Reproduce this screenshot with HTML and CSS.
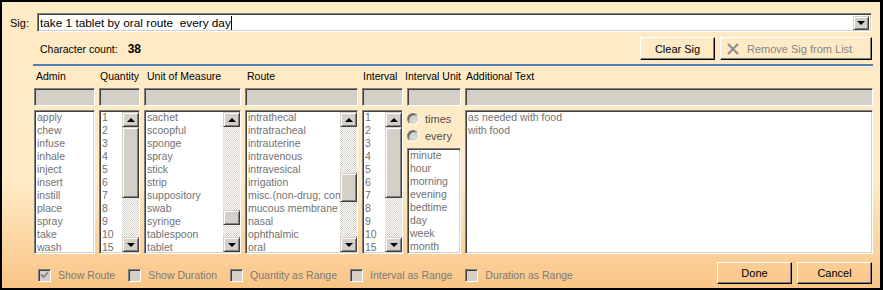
FILE: index.html
```html
<!DOCTYPE html>
<html lang="en">
<head>
    <meta charset="UTF-8">
    <title>Sig Builder</title>
    <link rel="stylesheet" href="styles.css">
</head>
<body>
<div class="window">
    <div class="sig-row">
        <label class="sig-label">Sig:</label>
        <div class="combo">
            <span class="combo-text">take 1 tablet by oral route  every day</span><span class="caret"></span>
            <span class="drop-btn"><i class="arrow-down"></i></span>
        </div>
    </div>

    <div class="count-row">
        <span>Character count:</span>
        <b class="count">38</b>
        <button class="btn btn-clear">Clear Sig</button>
        <button class="btn btn-remove" disabled>
            <svg width="12" height="12" viewBox="0 0 12 12"><path d="M1 1 L11 11 M11 1 L1 11" stroke="#8e8e8e" stroke-width="2.2" fill="none"/></svg>
            Remove Sig from List
        </button>
    </div>

    <div class="rule"></div>

    <div class="grid">
        <div class="head head-admin">Admin</div>
        <div class="head">Quantity</div>
        <div class="head head-uom">Unit of Measure</div>
        <div class="head head-route">Route</div>
        <div class="head">Interval</div>
        <div class="head head-unit">Interval Unit</div>
        <div class="head">Additional Text</div>

        <div class="field"></div>
        <div class="field"></div>
        <div class="field"></div>
        <div class="field"></div>
        <div class="field"></div>
        <div class="field"></div>
        <div class="field"></div>

        <div class="list">
            <div class="items">
                <div>apply</div><div>chew</div><div>infuse</div><div>inhale</div><div>inject</div><div>insert</div>
                <div>instill</div><div>place</div><div>spray</div><div>take</div><div>wash</div>
            </div>
        </div>
        <div class="list">
            <div class="items">
                <div>1</div><div>2</div><div>3</div><div>4</div><div>5</div><div>6</div>
                <div>7</div><div>8</div><div>9</div><div>10</div><div>15</div>
            </div>
            <div class="scroll">
                <span class="sbtn"><i class="arrow-up"></i></span>
                <div class="track"><div class="thumb" style="margin-top:0;height:71px"></div></div>
                <span class="sbtn"><i class="arrow-down"></i></span>
            </div>
        </div>
        <div class="list">
            <div class="items">
                <div>sachet</div><div>scoopful</div><div>sponge</div><div>spray</div><div>stick</div><div>strip</div>
                <div>suppository</div><div>swab</div><div>syringe</div><div>tablespoon</div><div>tablet</div>
            </div>
            <div class="scroll">
                <span class="sbtn"><i class="arrow-up"></i></span>
                <div class="track"><div class="thumb" style="margin-top:83px;height:15px"></div></div>
                <span class="sbtn"><i class="arrow-down"></i></span>
            </div>
        </div>
        <div class="list">
            <div class="items">
                <div>intrathecal</div><div>intratracheal</div><div>intrauterine</div><div>intravenous</div>
                <div>intravesical</div><div>irrigation</div><div>misc.(non-drug; combo route)</div>
                <div>mucous membrane</div><div>nasal</div><div>ophthalmic</div><div>oral</div>
            </div>
            <div class="scroll">
                <span class="sbtn"><i class="arrow-up"></i></span>
                <div class="track"><div class="thumb" style="margin-top:46px;height:29px"></div></div>
                <span class="sbtn"><i class="arrow-down"></i></span>
            </div>
        </div>
        <div class="list">
            <div class="items">
                <div>1</div><div>2</div><div>3</div><div>4</div><div>5</div><div>6</div>
                <div>7</div><div>8</div><div>9</div><div>10</div><div>15</div>
            </div>
            <div class="scroll">
                <span class="sbtn"><i class="arrow-up"></i></span>
                <div class="track"><div class="thumb" style="margin-top:0;height:71px"></div></div>
                <span class="sbtn"><i class="arrow-down"></i></span>
            </div>
        </div>
        <div class="unit-cell">
            <div class="radio-row"><span class="radio"></span>times</div>
            <div class="radio-row"><span class="radio"></span>every</div>
            <div class="list unit-list">
                <div class="items">
                    <div>minute</div><div>hour</div><div>morning</div><div>evening</div>
                    <div>bedtime</div><div>day</div><div>week</div><div>month</div>
                </div>
            </div>
        </div>
        <div class="list">
            <div class="items">
                <div>as needed with food</div><div>with food</div>
            </div>
        </div>
    </div>

    <div class="bottom-row">
        <div class="checks">
            <label class="check"><span class="box"><svg width="9" height="8" viewBox="0 0 9 8"><path d="M1 3.5 L3.5 6 L8 1.5" stroke="#8a8a8a" stroke-width="2" fill="none"/></svg></span>Show Route</label>
            <label class="check"><span class="box"></span>Show Duration</label>
            <label class="check"><span class="box"></span>Quantity as Range</label>
            <label class="check"><span class="box"></span>Interval as Range</label>
            <label class="check"><span class="box"></span>Duration as Range</label>
        </div>
        <button class="btn btn-done">Done</button>
        <button class="btn btn-cancel">Cancel</button>
    </div>
</div>
</body>
</html>
```

FILE: styles.css
```css
body { margin:0; font: 10.5px "Liberation Sans", Arial, sans-serif; color:#000; }
.window { width:883px; height:290px; box-sizing:border-box; border:2px solid #000; border-right-width:3px; padding:0 8px 0 8px; background: linear-gradient(#feebc6 0, #feebc6 62%, #fac586 100%); overflow:hidden; }

.sig-row { display:flex; align-items:center; margin-top:11px; font-size:11px; }
.sig-label { width:27px; }
.combo { flex:1; height:19px; box-sizing:border-box; display:flex; align-items:center; background:#fff; border:1px solid; border-color:#808080 #fff #fff #808080; box-shadow: inset 1px 1px #404040, inset -1px -1px #d4d0c8; padding-left:2px; }
.combo-text { white-space:pre; font-size:11.8px; }
.caret { width:1px; height:14px; background:#000; }
.drop-btn { margin-left:auto; margin-right:2px; width:16px; height:14px; box-sizing:border-box; display:flex; align-items:center; justify-content:center; background:#d4d0c8; border:1px solid; border-color:#d4d0c8 #404040 #404040 #d4d0c8; box-shadow: inset 1px 1px #fff, inset -1px -1px #808080; }

.count-row { display:flex; align-items:center; height:23px; margin-top:5px; padding-left:30px; }
.count { margin-left:10px; font-size:12px; }

.btn { height:23px; box-sizing:border-box; background:transparent; font:inherit; font-size:11px; color:#000; padding:0; border:1px solid; border-color:#fff #000 #000 #fff; box-shadow: inset -1px -1px #808080; }
.btn-clear { width:75px; margin-left:auto; }
.btn-remove { width:152px; margin-left:5px; color:#868686; display:flex; align-items:center; gap:8px; padding-left:6px; }

.rule { height:2px; background:#4f81b5; margin:4px -1px 0 23px; }

.grid { display:grid; grid-template-columns: 61px 41px 97px 113px 41px 54px 408px; grid-template-rows: 16px 18px 144px; column-gap:4px; row-gap:4px; margin:2px -1px 0 24px; }
.head { line-height:16px; padding-left:1px; white-space:nowrap; }
.head-admin, .head-route { padding-left:2px; }
.head-uom { padding-left:3px; }
.head-unit { margin-left:-3px; }

.field { background:#d4d0c8; border:1px solid; border-color:#808080 #fff #fff #808080; box-shadow: inset 1px 1px #404040, inset -1px -1px #d4d0c8; }

.list { display:flex; box-sizing:border-box; background:#fff; border:1px solid; border-color:#808080 #fff #fff #808080; box-shadow: inset 1px 1px #404040, inset -1px -1px #d4d0c8; overflow:hidden; }
.items { flex:1; min-width:0; padding-left:2px; line-height:13px; color:#727272; white-space:nowrap; overflow:hidden; }
.items > div { overflow:hidden; }

.scroll { width:17px; display:flex; flex-direction:column; margin:1px 0; }
.sbtn { height:15px; box-sizing:border-box; display:flex; align-items:center; justify-content:center; background:#d4d0c8; border:1px solid; border-color:#d4d0c8 #404040 #404040 #d4d0c8; box-shadow: inset 1px 1px #fff, inset -1px -1px #808080; }
.track { flex:1; background: repeating-conic-gradient(#d4d0c8 0 25%, #fff 0 50%) 0 0/2px 2px; }
.thumb { box-sizing:border-box; background:#d4d0c8; border:1px solid; border-color:#d4d0c8 #404040 #404040 #d4d0c8; box-shadow: inset 1px 1px #fff, inset -1px -1px #808080; }

.arrow-up, .arrow-down { width:0; height:0; border-left:4px solid transparent; border-right:4px solid transparent; }
.arrow-up { border-bottom:4px solid #000; }
.arrow-down { border-top:4px solid #000; }

.unit-cell { display:flex; flex-direction:column; }
.radio-row { height:17px; display:flex; align-items:center; gap:6px; color:#505050; font-size:11px; }
.radio { width:12px; height:12px; box-sizing:border-box; border-radius:50%; border:1px solid; border-color:#808080 #fff #fff #808080; background: radial-gradient(circle at 60% 60%, #e2dfd8, #bdb9b1); box-shadow: inset 1px 1px #505050; }
.unit-list { flex:1; margin-top:4px; }

.bottom-row { display:flex; align-items:center; height:22px; margin-top:8px; padding-left:28px; }
.checks { display:flex; gap:13px; padding-top:4px; color:#7a7a7a; font-size:10.5px; }
.check { display:flex; align-items:center; gap:7px; }
.box { width:13px; height:13px; box-sizing:border-box; display:flex; align-items:center; justify-content:center; background:#d4d0c8; border:1px solid; border-color:#808080 #fff #fff #808080; box-shadow: inset 1px 1px #404040, inset -1px -1px #d4d0c8; }
.btn-done { width:75px; height:22px; margin-left:auto; }
.btn-cancel { width:75px; height:22px; margin-left:5px; }
```
